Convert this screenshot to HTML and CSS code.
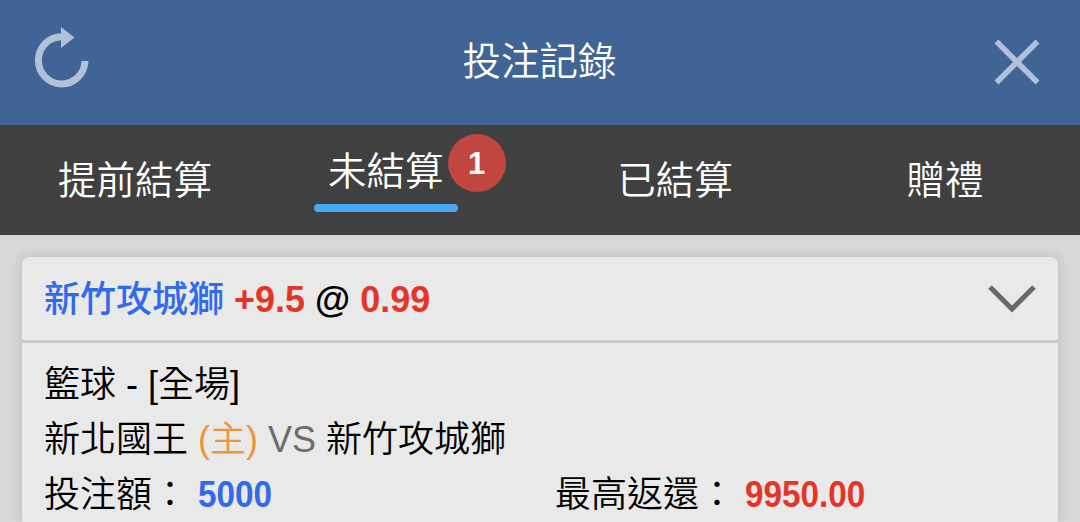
FILE: index.html
```html
<!DOCTYPE html>
<html lang="zh-Hant">
<head>
    <meta charset="UTF-8">
    <meta name="viewport" content="width=device-width, initial-scale=1.0">
    <title>投注記錄</title>
    <link rel="stylesheet" href="styles.css">
</head>
<body>
    <header class="header">
        <button class="icon-btn" aria-label="重新整理">
            <svg width="60" height="70" viewBox="0 0 60 70">
                <path d="M29.5 9.7 A23.3 23.6 0 1 0 53 34" fill="none" stroke="currentColor" stroke-width="7"/>
                <path d="M29 0 L42.5 10.5 L29 21 Z" fill="currentColor"/>
            </svg>
        </button>
        <h1>投注記錄</h1>
        <button class="icon-btn" aria-label="關閉">
            <svg width="46" height="46" viewBox="0 0 46 46">
                <path d="M2.5 2.5 L43.5 43.5 M43.5 2.5 L2.5 43.5" stroke="currentColor" stroke-width="5.6"/>
            </svg>
        </button>
    </header>

    <nav class="tabs">
        <a class="tab">提前結算</a>
        <a class="tab active"><span class="tab-label">未結算<span class="badge">1</span></span></a>
        <a class="tab">已結算</a>
        <a class="tab">贈禮</a>
    </nav>

    <main class="content">
        <section class="card">
            <div class="card-header">
                <h2><span class="team">新竹攻城獅</span> <span class="odds">+9.5</span> @ <span class="odds">0.99</span></h2>
                <svg class="chevron" width="48" height="28" viewBox="0 0 48 28">
                    <path d="M2 2 L24 24 L46 2" fill="none" stroke="currentColor" stroke-width="5"/>
                </svg>
            </div>
            <div class="card-body">
                <p>籃球 - [全場]</p>
                <p>新北國王 <span class="home">(主)</span> <span class="vs">VS</span> 新竹攻城獅</p>
                <div class="amounts">
                    <p>投注額： <strong class="stake">5000</strong></p>
                    <p>最高返還： <strong class="payout">9950.00</strong></p>
                </div>
            </div>
        </section>
    </main>
</body>
</html>
```

FILE: styles.css
```css
* {
    box-sizing: border-box;
}
body {
    display: flex;
    flex-direction: column;
    margin: 0;
    height: 100vh;
    font-family: 'Liberation Sans', 'Noto Sans CJK TC', sans-serif;
    font-size: 36px;
    background-color: #d7d7d7;
    color: #000;
}
h1, h2, p {
    margin: 0;
}
.header {
    display: flex;
    align-items: center;
    justify-content: space-between;
    height: 125px;
    padding: 0 40px 2px 32px;
    background-color: #406495;
    color: #fff;
}
.header h1 {
    font-size: 38.5px;
    font-weight: 350;
    line-height: 60px;
    padding-right: 7px;
}
.icon-btn {
    display: flex;
    padding: 0;
    border: none;
    background: none;
    color: #b0c1d8;
}
.tabs {
    display: grid;
    grid-template-columns: repeat(4, 1fr);
    height: 110px;
    background-color: #404040;
    color: #fff;
    font-size: 38.5px;
    font-weight: 350;
}
.tab {
    display: flex;
    align-items: center;
    justify-content: center;
    padding-top: 2px;
    line-height: 60px;
}
.tab.active {
    align-items: flex-start;
    justify-content: flex-start;
    padding: 17px 0 0 44px;
}
.tab-label {
    position: relative;
    padding: 0 14px;
}
.tab-label::after {
    content: "";
    display: block;
    height: 8px;
    margin: 2px -14px 0;
    border-radius: 4px;
    background-color: #4ba8f7;
}
.badge {
    position: absolute;
    top: -8px;
    right: -48px;
    width: 58px;
    height: 58px;
    border-radius: 50%;
    background-color: #c1463f;
    font-size: 31px;
    font-weight: bold;
    line-height: 59px;
    text-align: center;
}
.content {
    flex: 1;
    padding: 22px 22px 0;
}
.card {
    height: 100%;
    border-radius: 8px 8px 0 0;
    background-color: #e9e9e9;
    box-shadow: 0 0 12px rgba(0, 0, 0, 0.13);
}
.card-header {
    display: flex;
    align-items: center;
    justify-content: space-between;
    height: 86px;
    padding: 0 22px;
    border-bottom: 3px solid #cbcbcb;
}
.card-header h2 {
    font-size: 36px;
    font-weight: bold;
    line-height: 55px;
    padding-top: 2px;
}
.team {
    color: #316aeb;
    font-weight: 500;
}
.odds {
    color: #e43528;
}
.chevron {
    color: #696969;
}
.card-body {
    padding: 14px 22px 0;
    line-height: 55px;
    font-weight: 350;
}
.home {
    color: #ec963b;
}
.vs {
    color: #6d6d6d;
}
.amounts {
    display: grid;
    grid-template-columns: 511px 1fr;
}
/* Condensed digits for the amounts */
.stake, .payout {
    display: inline-block;
    transform: scaleX(0.925);
    transform-origin: left;
}
.stake {
    color: #316aeb;
}
.payout {
    color: #e43528;
}
```
